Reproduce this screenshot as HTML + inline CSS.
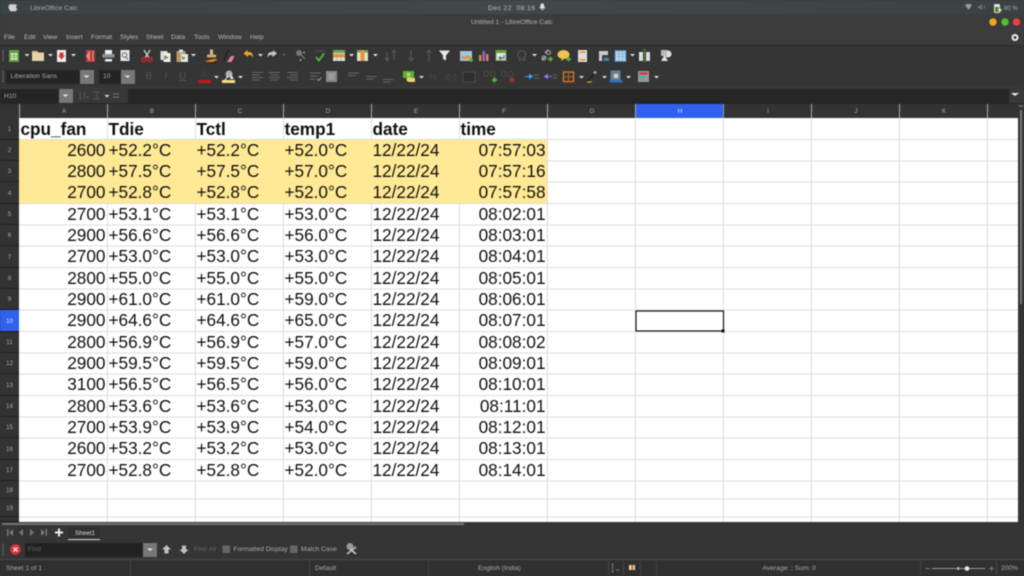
<!DOCTYPE html>
<html><head><meta charset="utf-8"><style>
html,body{margin:0;padding:0;background:#333}
#p{position:relative;width:1024px;height:576px;overflow:hidden;background:#353535;font-family:"Liberation Sans",sans-serif;filter:blur(.5px)}
.a{position:absolute;white-space:nowrap}
.t{position:absolute;white-space:nowrap;font-size:6.7px;color:#b8b8b8;line-height:10px}
.r{position:absolute;left:19px;width:528px;display:flex;font-size:17.2px;color:#111}
.r span{display:block;width:88px;box-sizing:border-box;padding-left:1.5px;white-space:nowrap}
.r span.n{text-align:right;padding:0 1.5px 0 0}
.r.h{font-weight:bold}
.y{background:#ffe994}
.ch{position:absolute;top:104px;height:14px;width:88px;text-align:center;font-size:6.5px;line-height:15px;color:#aaa}
.rh{position:absolute;left:0;width:19px;text-align:center;font-size:6.3px;color:#aaa;background:#333;border-bottom:1px solid #1f1f1f;box-sizing:border-box;padding-top:1px}
</style></head><body><div id="p">
<div class="a" style="left:0;top:0;width:1024px;height:14px;background:linear-gradient(90deg,#3b4243,#41494a 50%,#3b4243)"></div>
<div class="a" style="left:0;top:14px;width:1024px;height:31px;background:#3c3c3c"></div>
<div class="a" style="left:0;top:45px;width:1024px;height:1px;background:#2b2b2b"></div>
<div class="a" style="left:0;top:87px;width:1024px;height:17px;background:#383838"></div>
<div class="a" style="left:0;top:103px;width:1024px;height:1px;background:#262626"></div>

<div class="a" style="left:19px;top:118px;width:999px;height:404px;background:#fff"></div>
<div class="a y" style="left:19px;top:140px;width:528px;height:63.5px"></div>
<svg class="a" style="left:0;top:0" width="1024" height="576" viewBox="0 0 1024 576">
<g stroke="#dcdcdc" stroke-width="1">
<path d="M19 139.5H1018M547 161H1018M547 182H1018M19 203.5H1018M19 225H1018M19 246H1018M19 267.5H1018M19 289H1018M19 310H1018M19 331.5H1018M19 353H1018M19 374H1018M19 395.5H1018M19 417H1018M19 438H1018M19 459.5H1018M19 481H1018M19 499H1018M19 517H1018"/>
<path d="M107.500 118V140M107.500 203V522M195.500 118V140M195.500 203V522M283.500 118V140M283.500 203V522M371.500 118V140M371.500 203V522M459.500 118V140M459.500 203V522M547.500 118V522M635.500 118V522M723.500 118V522M811.500 118V522M899.500 118V522M987.500 118V522"/>
</g>
<rect x="636" y="311" width="87.500" height="20" fill="none" stroke="#111" stroke-width="1.200"/><rect x="721.500" y="329.500" width="3" height="3" fill="#111"/>
</svg>

<div class="a" style="left:0;top:104px;width:1018px;height:14px;background:#333"></div>
<div class="a" style="left:636px;top:104px;width:88px;height:14px;background:#3060ee"></div>
<svg class="a" style="left:0;top:104px" width="1024" height="14"><path d="M19.500 0V14M107.500 0V14M195.500 0V14M283.500 0V14M371.500 0V14M459.500 0V14M547.500 0V14M635.500 0V14M811.500 0V14M899.500 0V14M987.500 0V14" stroke="#a8a8a8"/><path d="M723.500 0V14" stroke="#999"/></svg>
<div class="ch" style="left:20px">A</div><div class="ch" style="left:108px">B</div><div class="ch" style="left:196px">C</div><div class="ch" style="left:284px">D</div><div class="ch" style="left:372px">E</div><div class="ch" style="left:460px">F</div><div class="ch" style="left:548px">G</div><div class="ch" style="left:636px;color:#d8e0ff">H</div><div class="ch" style="left:724px">I</div><div class="ch" style="left:812px">J</div><div class="ch" style="left:900px">K</div>

<div class="rh" style="top:118px;height:22px;line-height:21px">1</div>
<div class="rh" style="top:140px;height:21px;line-height:20px">2</div>
<div class="rh" style="top:161px;height:21px;line-height:20px">3</div>
<div class="rh" style="top:182px;height:22px;line-height:21px">4</div>
<div class="rh" style="top:204px;height:21px;line-height:20px">5</div>
<div class="rh" style="top:225px;height:21px;line-height:20px">6</div>
<div class="rh" style="top:246px;height:22px;line-height:21px">7</div>
<div class="rh" style="top:268px;height:21px;line-height:20px">8</div>
<div class="rh" style="top:289px;height:21px;line-height:20px">9</div>
<div class="rh" style="top:310px;height:22px;line-height:21px;background:#3060ee;color:#dfe6ff">10</div>
<div class="rh" style="top:332px;height:21px;line-height:20px">11</div>
<div class="rh" style="top:353px;height:21px;line-height:20px">12</div>
<div class="rh" style="top:374px;height:22px;line-height:21px">13</div>
<div class="rh" style="top:396px;height:21px;line-height:20px">14</div>
<div class="rh" style="top:417px;height:21px;line-height:20px">15</div>
<div class="rh" style="top:438px;height:22px;line-height:21px">16</div>
<div class="rh" style="top:460px;height:21px;line-height:20px">17</div>
<div class="rh" style="top:481px;height:18px;line-height:17px">18</div>
<div class="rh" style="top:499px;height:18px;line-height:17px">19</div>
<div class="rh" style="top:517px;height:5px;padding:0"></div>

<div class="r h" style="top:118px;height:21px;line-height:22px"><span>cpu_fan</span><span>Tdie</span><span>Tctl</span><span>temp1</span><span>date</span><span>time</span></div>
<div class="r" style="top:140px;height:21px;line-height:21px"><span class="n">2600</span><span>+52.2°C</span><span>+52.2°C</span><span>+52.0°C</span><span>12/22/24</span><span class="n">07:57:03</span></div>
<div class="r" style="top:161px;height:21px;line-height:21px"><span class="n">2800</span><span>+57.5°C</span><span>+57.5°C</span><span>+57.0°C</span><span>12/22/24</span><span class="n">07:57:16</span></div>
<div class="r" style="top:182px;height:21px;line-height:21px"><span class="n">2700</span><span>+52.8°C</span><span>+52.8°C</span><span>+52.0°C</span><span>12/22/24</span><span class="n">07:57:58</span></div>
<div class="r" style="top:204px;height:21px;line-height:21px"><span class="n">2700</span><span>+53.1°C</span><span>+53.1°C</span><span>+53.0°C</span><span>12/22/24</span><span class="n">08:02:01</span></div>
<div class="r" style="top:225px;height:21px;line-height:21px"><span class="n">2900</span><span>+56.6°C</span><span>+56.6°C</span><span>+56.0°C</span><span>12/22/24</span><span class="n">08:03:01</span></div>
<div class="r" style="top:246px;height:21px;line-height:21px"><span class="n">2700</span><span>+53.0°C</span><span>+53.0°C</span><span>+53.0°C</span><span>12/22/24</span><span class="n">08:04:01</span></div>
<div class="r" style="top:268px;height:21px;line-height:21px"><span class="n">2800</span><span>+55.0°C</span><span>+55.0°C</span><span>+55.0°C</span><span>12/22/24</span><span class="n">08:05:01</span></div>
<div class="r" style="top:289px;height:21px;line-height:21px"><span class="n">2900</span><span>+61.0°C</span><span>+61.0°C</span><span>+59.0°C</span><span>12/22/24</span><span class="n">08:06:01</span></div>
<div class="r" style="top:310px;height:21px;line-height:21px"><span class="n">2900</span><span>+64.6°C</span><span>+64.6°C</span><span>+65.0°C</span><span>12/22/24</span><span class="n">08:07:01</span></div>
<div class="r" style="top:332px;height:21px;line-height:21px"><span class="n">2800</span><span>+56.9°C</span><span>+56.9°C</span><span>+57.0°C</span><span>12/22/24</span><span class="n">08:08:02</span></div>
<div class="r" style="top:353px;height:21px;line-height:21px"><span class="n">2900</span><span>+59.5°C</span><span>+59.5°C</span><span>+59.0°C</span><span>12/22/24</span><span class="n">08:09:01</span></div>
<div class="r" style="top:374px;height:21px;line-height:21px"><span class="n">3100</span><span>+56.5°C</span><span>+56.5°C</span><span>+56.0°C</span><span>12/22/24</span><span class="n">08:10:01</span></div>
<div class="r" style="top:396px;height:21px;line-height:21px"><span class="n">2800</span><span>+53.6°C</span><span>+53.6°C</span><span>+53.0°C</span><span>12/22/24</span><span class="n">08:11:01</span></div>
<div class="r" style="top:417px;height:21px;line-height:21px"><span class="n">2700</span><span>+53.9°C</span><span>+53.9°C</span><span>+54.0°C</span><span>12/22/24</span><span class="n">08:12:01</span></div>
<div class="r" style="top:438px;height:21px;line-height:21px"><span class="n">2600</span><span>+53.2°C</span><span>+53.2°C</span><span>+53.0°C</span><span>12/22/24</span><span class="n">08:13:01</span></div>
<div class="r" style="top:460px;height:21px;line-height:21px"><span class="n">2700</span><span>+52.8°C</span><span>+52.8°C</span><span>+52.0°C</span><span>12/22/24</span><span class="n">08:14:01</span></div>

<!-- right scrollbar -->
<div class="a" style="left:1018px;top:104px;width:6px;height:418px;background:#333"></div>
<div class="a" style="left:1020px;top:110px;width:2px;height:194px;background:#777"></div>
<div class="a" style="left:1019px;top:105px;width:4px;height:2px;background:#666"></div>
<!-- bottom -->
<div class="a" style="left:0;top:522px;width:1024px;height:54px;background:#353535"></div>
<div class="a" style="left:2px;top:523px;width:462px;height:2px;background:#777"></div>
<div class="a" style="left:0;top:559px;width:1024px;height:1px;background:#4a4a4a"></div>
<div class="a" style="left:0;top:560px;width:1024px;height:16px;background:#303030"></div>
<div class="a" style="left:68px;top:527px;width:32px;height:12px;background:#2f2f2f;border-bottom:1px solid #ddd"></div>

<!-- boxes -->
<div class="a" style="left:6px;top:70px;width:74px;height:14px;background:#242424"></div>
<div class="a" style="left:80px;top:70px;width:14px;height:14px;background:#777"></div>
<div class="a" style="left:99px;top:70px;width:22px;height:14px;background:#242424"></div>
<div class="a" style="left:121px;top:70px;width:14px;height:14px;background:#777"></div>
<div class="a" style="left:0;top:89px;width:59px;height:14px;background:#252525"></div>
<div class="a" style="left:59px;top:89px;width:14px;height:14px;background:#777"></div>
<div class="a" style="left:128px;top:89px;width:881px;height:14px;background:#262626"></div>
<div class="a" style="left:25px;top:543px;width:118px;height:14px;background:#222"></div>
<div class="a" style="left:143px;top:543px;width:14px;height:14px;background:#777"></div>

<svg class="a" style="left:0;top:0" width="1024" height="576" viewBox="0 0 1024 576">
<!-- apple -->
<path d="M12 4.500c1-.2 1.500-.6 1.800-1.800.2 1-.6 1.800-1 2 1 .1 1.300-.5 2.300-.5 1 0 1.700.5 2 1-1.500 1-1.200 3 .2 3.600-.5 1.300-1.300 2.700-2.300 2.700-.8 0-1-.4-1.800-.4s-1.100.4-1.800.4c-1.200 0-2.900-2.500-2.900-4.500 0-2 1.300-2.900 2.500-2.900.5 0 .8.200 1 .4z" fill="#d0d0d0"/>
<!-- tray -->
<path d="M965 5q3.500-2.500 7 0l-3.500 5z" fill="#999"/><path d="M978 6h2l2-2v6l-2-2h-2z" fill="#777"/><path d="M984 5.500q1 1.500 0 3" stroke="#777" fill="none"/>
<rect x="994" y="4" width="6" height="9" rx="1" fill="#ddd"/><rect x="995" y="7" width="4" height="5" fill="#4a8a2c"/><path d="M998 10h4M1000 8v4" stroke="#eee"/>
<path d="M542 3.500c2-.5 2.800 1 2.800 3l1 2h-6l1-2c0-1.500 0-2.500 1.200-3z M542 9h2v1h-2z" fill="#ddd" transform="translate(-0.500,0)"/>
<!-- window -->
<circle cx="993" cy="22" r="3.700" fill="#f2a81d"/><circle cx="1005" cy="22" r="3.700" fill="#4fc02f"/><circle cx="1016.500" cy="22" r="3.700" fill="#e8423f"/>
<circle cx="1015" cy="37.500" r="2.500" fill="none" stroke="#eee" stroke-width="2"/>
<!-- grips -->
<path d="M3 50v11M3 71v11M3 544v11" stroke="#777" stroke-dasharray="1 1" stroke-width="1.500"/>
<g fill="#e0e0e0">
<path d="M24.500 54h5l-2.500 2.500zM48 54h5l-2.500 2.500zM71 54h5l-2.500 2.500zM191 54h5l-2.500 2.500zM258 54h5l-2.500 2.500zM349 54h5l-2.500 2.500zM373 54h5l-2.500 2.500zM532 54h5l-2.500 2.500zM630 54h5l-2.500 2.500z"/>
<path d="M214 76h5l-2.500 2.500zM238 76h5l-2.500 2.500zM419 76h5l-2.500 2.500zM579 76h5l-2.500 2.500zM602 76h5l-2.500 2.500zM626 76h5l-2.500 2.500zM654 76h5l-2.500 2.500zM104.500 95h5l-2.500 2.500z"/>
<path d="M83.500 75.500h6l-3 2.500zM124.500 75.500h6l-3 2.500zM62.500 94.500h6l-3 2.500zM147 548.500h6l-3 2.500z"/>
</g>
<path d="M282 54h4l-2 2z" fill="#666"/>
<!-- new -->
<rect x="9" y="50" width="10" height="12" fill="#5f9e3d"/><rect x="10.500" y="53" width="7" height="7" fill="#d5e6c8"/><path d="M10.500 55.500h7M10.500 57.500h7M14 53v7" stroke="#6fa64e" stroke-width=".7"/>
<!-- folder -->
<path d="M32 51h5l1.500 1.500H44V61H32z" fill="#dcc596"/><rect x="32" y="53" width="12" height="8" fill="#e6d3aa"/>
<!-- template -->
<rect x="57" y="50" width="9" height="12" fill="#eee"/><path d="M59.500 52.500h4v3h1.500l-3.500 4-3.500-4h1.500z" fill="#d5383a"/>
<!-- pdf -->
<path d="M86 50h9v12h-9z" fill="#b83a3a"/><path d="M86 56l4-6v12z" fill="#e08b80"/><path d="M93 51v10" stroke="#e7b1a8" stroke-width=".8"/>
<!-- print -->
<rect x="105" y="50" width="7" height="4" fill="#eee"/><rect x="102.500" y="54" width="12" height="5" fill="#8c9498"/><rect x="102.500" y="57.500" width="12" height="2.500" fill="#333a44"/><rect x="105" y="59" width="7" height="2.500" fill="#eee"/>
<!-- preview -->
<rect x="120.500" y="50" width="9" height="11" fill="#e8e8e8"/><circle cx="124.500" cy="55" r="2.300" fill="none" stroke="#666"/><path d="M126 57l2 2.500" stroke="#555"/>
<!-- cut -->
<path d="M144 50l5 8M150 50l-5 8" stroke="#d6d6d6" stroke-width="1.200"/><circle cx="144" cy="59.500" r="2" fill="none" stroke="#c7272b" stroke-width="1.500"/><circle cx="150" cy="59.500" r="2" fill="none" stroke="#c7272b" stroke-width="1.500"/>
<!-- copy -->
<rect x="160.500" y="51" width="7" height="9" fill="#ddd"/><rect x="163.500" y="53" width="7" height="9" fill="#eee"/><path d="M164 55l5 2.500-5 2.500z" fill="#6aa84f"/>
<!-- paste -->
<rect x="176.500" y="51" width="9" height="11" fill="#b79a70"/><rect x="179" y="49.500" width="4" height="3" fill="#ddd"/><rect x="181" y="54" width="7" height="8" fill="#e6e6e6"/><path d="M182 56l4 2-4 2z" fill="#6aa84f"/>
<!-- clone -->
<rect x="210" y="49.500" width="3" height="5" fill="#d9b98a"/><rect x="207" y="54.500" width="9" height="3" fill="#c9a877"/><path d="M204.500 62q5-3 11-3l2 1-5 2z" fill="#e8851e"/><path d="M204 62.500h13" stroke="#222"/>
<!-- eraser -->
<path d="M224 61l3.500-10h2.500" stroke="#222" fill="none" stroke-width="1.200"/><path d="M227 62l4-6h3.500l-3 6z" fill="#ee7fa3"/>
<!-- undo/redo -->
<path d="M243.500 53.500l4-3.500v2h2.500q3 .5 3 6-1-3-3-3H248v2z" fill="#e8a92d"/>
<path d="M277 53.500l-4-3.500v2h-2.500q-3 .5-3 6 1-3 3-3h2v2z" fill="#c6c6c6"/>
<!-- find -->
<circle cx="299" cy="53" r="3" fill="#777"/><path d="M301 55l4 4" stroke="#888"/><circle cx="304" cy="52.500" r="1" fill="#b583c8"/><circle cx="300.500" cy="60" r="1" fill="#9a9"/>
<!-- spell -->
<path d="M316 57l3 3.500 5-7" stroke="#58b53a" stroke-width="1.800" fill="none"/><path d="M314 51h11" stroke="#444" stroke-width="2"/>
<!-- row/col -->
<rect x="333" y="50" width="12" height="11" fill="#dbe4cf"/><rect x="333" y="50" width="12" height="3" fill="#6fa64e"/><rect x="333" y="54" width="12" height="3.500" fill="#e8923a"/><path d="M337 50v11M341 50v11" stroke="#999" stroke-width=".5"/>
<rect x="357" y="50" width="11" height="11" fill="#dbe4cf"/><rect x="357" y="50" width="11" height="2.500" fill="#6fa64e"/><rect x="360.500" y="50" width="4" height="11" fill="#e8923a"/>
<!-- sort -->
<g stroke="#555" stroke-width="1.300" fill="none"><path d="M387 61v-9M385 58l2 3 2-3M394 50v10M392 53l2-3 2 3"/><path d="M411 50v11M408.500 58l2.500 3 2.500-3"/><path d="M429 61V50M426.500 53l2.500-3 2.500 3"/></g>
<path d="M439 50.500h11l-4 5v5l-3-1.500v-3.500z" fill="#e6e6e6"/>
<!-- image -->
<rect x="460" y="51" width="12" height="10" fill="#9ec6e2"/><path d="M461 59h10v-2l-3-2-3 2-2-1z" fill="#e8923a"/><path d="M469 60h4M471 58v4" stroke="#5fbb35" stroke-width="1.500"/>
<!-- chart -->
<rect x="479" y="55" width="2.500" height="6" fill="#e0892e"/><rect x="482.500" y="51" width="2.500" height="10" fill="#8d6fc0"/><rect x="486" y="54" width="2.500" height="7" fill="#e07a70"/>
<!-- pivot -->
<rect x="496" y="50.500" width="10" height="10" fill="#dfe9dc" stroke="#5fa53c"/><rect x="496" y="50.500" width="10" height="2.500" fill="#5fa53c"/><path d="M504 55v3h-4M501 56.500l-2 1.500 2 1.500" stroke="#7359b8" fill="none" stroke-width="1.200"/>
<!-- omega -->
<path d="M519 60h2.500v-1.500a4 4 0 1 1 2.500 0V60h2.500" transform="translate(-1,0)" stroke="#555" fill="none" stroke-width="1.200"/>
<!-- link -->
<path d="M542 60l3-3M545 53l3-3" stroke="#aaa" stroke-width="1.500"/><circle cx="544" cy="58" r="2" fill="none" stroke="#aaa"/><circle cx="548.500" cy="52.500" r="2" fill="none" stroke="#aaa"/><path d="M548 59h5M550.500 56.500v5" stroke="#5fbb35" stroke-width="1.500"/>
<!-- comment -->
<ellipse cx="563.500" cy="54.500" rx="6" ry="4.500" fill="#f0c14f"/><path d="M562 58l-1 3 3-2z" fill="#f0c14f"/><path d="M566 59h5M568.500 56.500v5" stroke="#5fbb35" stroke-width="1.500"/>
<!-- header -->
<rect x="578" y="50" width="9" height="12" fill="#ddd"/><rect x="579.500" y="51.500" width="6" height="1.500" fill="#e8923a"/><rect x="579.500" y="59" width="6" height="1.500" fill="#e8923a"/>
<!-- freeze -->
<rect x="599" y="51" width="9" height="10" fill="#ccc"/><rect x="602" y="55" width="6" height="6" fill="#444"/><rect x="604" y="58" width="5" height="3" fill="#3b8bb5"/>
<!-- table -->
<rect x="615" y="50.500" width="11" height="11" fill="#bcd6ec" stroke="#3c7fb8"/><path d="M615 53.500h11M615 56.500h11M619 51v10M622.500 51v10" stroke="#6ea2cc" stroke-width=".6"/>
<!-- split -->
<rect x="639" y="52" width="4" height="9" fill="#ddd"/><rect x="646" y="52" width="4" height="9" fill="#ddd"/><path d="M644.500 49v13" stroke="#5fbb35" stroke-dasharray="2 1" stroke-width="1.200"/>
<!-- shapes -->
<path d="M661 61l3.500-6 3.500 6z" fill="#ddd"/><circle cx="668" cy="54" r="3.500" fill="#ddd"/><rect x="661" y="50" width="6" height="6" fill="#bbb"/>
<!-- align grey lines toolbar 2 -->
<g stroke="#666" stroke-width="1" fill="none">
<path d="M252 72.500h11M252 75h8M252 77.500h11M252 80h8"/><path d="M269 72.500h11M270.500 75h8M269 77.500h11M270.500 80h8"/><path d="M287 72.500h11M290 75h8M287 77.500h11M290 80h8"/>
<path d="M348 73h11M348 75.500h8"/><path d="M366 76.500h11M366 79h8"/><path d="M383 79.500h11M383 82h8"/>
<path d="M310 73h11M310 76h8M310 79h5"/>
</g>
<path d="M317 79l1.500 1.500 3-3" stroke="#5fbb35" fill="none" stroke-width="1.200"/>
<rect x="326" y="71" width="11" height="11" fill="#8a8a8a"/><rect x="328.500" y="73.500" width="6" height="6" fill="#9c9c9c"/>
<!-- color A -->
<rect x="198" y="80" width="13" height="3" fill="#c7191c"/>
<path d="M222 80h13v3h-13z" fill="#f2de84"/><circle cx="229" cy="74" r="3.500" fill="#b0b0b0"/><path d="M231 74l3 5h-4z" fill="#ddd"/><path d="M225 80l3-4" stroke="#fff"/>
<!-- currency -->
<rect x="403" y="71" width="11" height="7" fill="#5fb236"/><circle cx="408.500" cy="74.500" r="1.800" fill="#a9df85"/><circle cx="409" cy="79.500" r="2.500" fill="#f0d060"/><rect x="410" y="78" width="5" height="4" fill="#ecd27a"/>
<!-- dec -->
<circle cx="486" cy="74" r="2.500" fill="none" stroke="#4a4a4a"/><circle cx="493" cy="74" r="2.500" fill="none" stroke="#4a4a4a"/><path d="M492 80h5M494.500 77.500v5" stroke="#5fbb35" stroke-width="1.800"/>
<circle cx="504" cy="74" r="2.500" fill="none" stroke="#4a4a4a"/><circle cx="511" cy="74" r="2.500" fill="none" stroke="#4a4a4a"/><path d="M510 78l4 4M514 78l-4 4" stroke="#c33" stroke-width="1.500"/>
<rect x="463" y="72" width="12" height="10" fill="#2e2e2e" stroke="#4a4a4a"/>
<!-- indent -->
<path d="M525 76.500h6M529.500 74.500l3 2-3 2z" stroke="#36a2e0" fill="#36a2e0"/><path d="M534 75h5M534 78h5" stroke="#666"/>
<path d="M546 76.500h6M547.500 74.500l-3 2 3 2z" stroke="#9b6ee0" fill="#9b6ee0"/><path d="M553 75h4M553 78h4" stroke="#666"/>
<!-- borders -->
<rect x="563.500" y="72" width="10" height="9.500" fill="none" stroke="#e07a1e" stroke-width="1.300"/><path d="M568.500 72v9.500M563.500 76.700h10" stroke="#a56a30"/>
<!-- line -->
<path d="M588 81l7-8" stroke="#222" stroke-width="1.500"/><circle cx="595" cy="72.500" r="1.500" fill="#c78ad8"/><path d="M587 82h5" stroke="#e0c040"/>
<!-- border color -->
<rect x="611" y="71" width="9" height="9" fill="#777" stroke="#3a8ac8"/><circle cx="616" cy="76" r="2.500" fill="#ccc"/><rect x="609.500" y="80" width="13" height="2.500" fill="#2d72b8"/>
<!-- cond -->
<rect x="638" y="71" width="11" height="11" fill="#999"/><rect x="639.500" y="72.500" width="8" height="2" fill="#c33"/><rect x="639.500" y="76" width="5" height="2" fill="#4ab"/><rect x="639.500" y="79" width="5" height="1.500" fill="#5b5"/>
<!-- formula -->
<path d="M93 92h6l-3 3.500 3 3.500h-6" stroke="#555" fill="none"/><path d="M113 94h6M113 97h6" stroke="#777"/>
<path d="M80 92v7h2M85 92l-1 7M88 99v-2h-2" stroke="#555" fill="none"/>
<path d="M1011 93h8l-4 3z" fill="#e8e8e8"/>
<!-- sheet nav -->
<g fill="#777"><path d="M7 529h1.500v7H7zM13 529v7l-4-3.500z"/><path d="M23 529v7l-4-3.500z"/><path d="M30 529l4 3.500-4 3.500z"/><path d="M41 529l4 3.500-4 3.500zM45.500 529H47v7h-1.500z"/></g>
<path d="M55 532.500h8M59 528.500v8" stroke="#eee" stroke-width="2"/>
<!-- find close -->
<circle cx="15.500" cy="549.500" r="5.300" fill="#dc3240"/><path d="M13.500 547.500l4 4M17.500 547.500l-4 4" stroke="#fff" stroke-width="1.200"/>
<path d="M166.500 545l4.500 4.500h-2.500v4h-4v-4H162z" fill="#c0c0c0"/><path d="M184 554l-4.500-4.500H182v-4h4v4h2.500z" fill="#c0c0c0"/>
<rect x="222.500" y="545.500" width="7.500" height="7.500" fill="#666"/><rect x="290" y="545.500" width="7.500" height="7.500" fill="#666"/>
<circle cx="350" cy="546.500" r="3.500" fill="#999"/><path d="M347 554l9-7" stroke="#aaa" stroke-width="2"/><path d="M350 549l6 5" stroke="#ccc" stroke-width="1.500"/>
<!-- status -->
<path d="M130.500 561v14M309.500 561v14M428.500 561v14M608.500 561v14M623.500 561v14M640.500 561v14M656.500 561v14M920.500 561v14M996.500 561v14" stroke="#444"/>
<path d="M612.500 564v8M611.500 564h2M611.500 572h2M616 570h3" stroke="#777" fill="none"/>
<rect x="629" y="565" width="6" height="5" fill="#ddd"/><rect x="631" y="565" width="2.500" height="5" fill="#e07a1e"/>
<path d="M925 568.500h5M989 568.500h5M991.500 566v5" stroke="#777"/><path d="M932 568.500h53" stroke="#999"/><rect x="957.500" y="567" width="1.500" height="3" fill="#ccc"/><circle cx="967" cy="568.500" r="2.300" fill="#eee"/>
</svg>

<div class="t" style="left:30px;top:3.500px;color:#aaa">LibreOffice Calc</div>
<div class="t" style="left:488px;top:3.500px;color:#c0c0c0;letter-spacing:.45px">Dec 22&nbsp; 08:16</div>
<div class="t" style="left:1004px;top:3.500px;font-size:6px;color:#aaa">80 %</div>
<div class="t" style="left:471px;top:18px;color:#b5b5b5">Untitled 1 - LibreOffice Calc</div>
<div class="t" style="left:4px;top:33px">File</div><div class="t" style="left:24px;top:33px">Edit</div><div class="t" style="left:43px;top:33px">View</div><div class="t" style="left:66px;top:33px">Insert</div><div class="t" style="left:91px;top:33px">Format</div><div class="t" style="left:120px;top:33px">Styles</div><div class="t" style="left:146px;top:33px">Sheet</div><div class="t" style="left:171px;top:33px">Data</div><div class="t" style="left:194px;top:33px">Tools</div><div class="t" style="left:218px;top:33px">Window</div><div class="t" style="left:250px;top:33px">Help</div>
<div class="t" style="left:10.500px;top:72px;color:#aaa">Liberation Sans</div>
<div class="t" style="left:103px;top:72px;color:#aaa">10</div>
<div class="t" style="left:4px;top:91.500px;color:#aaa">H10</div>
<div class="t" style="left:145.500px;top:71px;font-size:10px;line-height:11px;color:#555">B</div>
<div class="t" style="left:164.500px;top:71px;font-size:10px;line-height:11px;color:#555;font-style:italic">I</div>
<div class="t" style="left:179px;top:71px;font-size:10px;line-height:11px;color:#555;text-decoration:underline">U</div>
<div class="t" style="left:201px;top:69.500px;font-size:10px;line-height:11px;color:#444">A</div>
<div class="t" style="left:429px;top:72px;font-size:9px;line-height:11px;color:#4c4c4c">%</div>
<div class="t" style="left:446px;top:72px;font-size:8px;line-height:11px;color:#4c4c4c">0.0</div>
<div class="t" style="left:75px;top:529px;color:#ddd;font-size:6.300px">Sheet1</div>
<div class="t" style="left:28px;top:545px;color:#666">Find</div>
<div class="t" style="left:194px;top:545px;color:#666">Find All</div>
<div class="t" style="left:233.500px;top:545px;color:#aaa">Formatted Display</div>
<div class="t" style="left:301px;top:545px;color:#aaa">Match Case</div>
<div class="t" style="left:6px;top:564px;color:#aaa">Sheet 1 of 1</div>
<div class="t" style="left:315px;top:564px;color:#aaa">Default</div>
<div class="t" style="left:478px;top:564px;color:#aaa">English (India)</div>
<div class="t" style="left:762.500px;top:564px;color:#aaa">Average: ; Sum: 0</div>
<div class="t" style="left:1001px;top:564px;color:#aaa">200%</div>
</div></body></html>
